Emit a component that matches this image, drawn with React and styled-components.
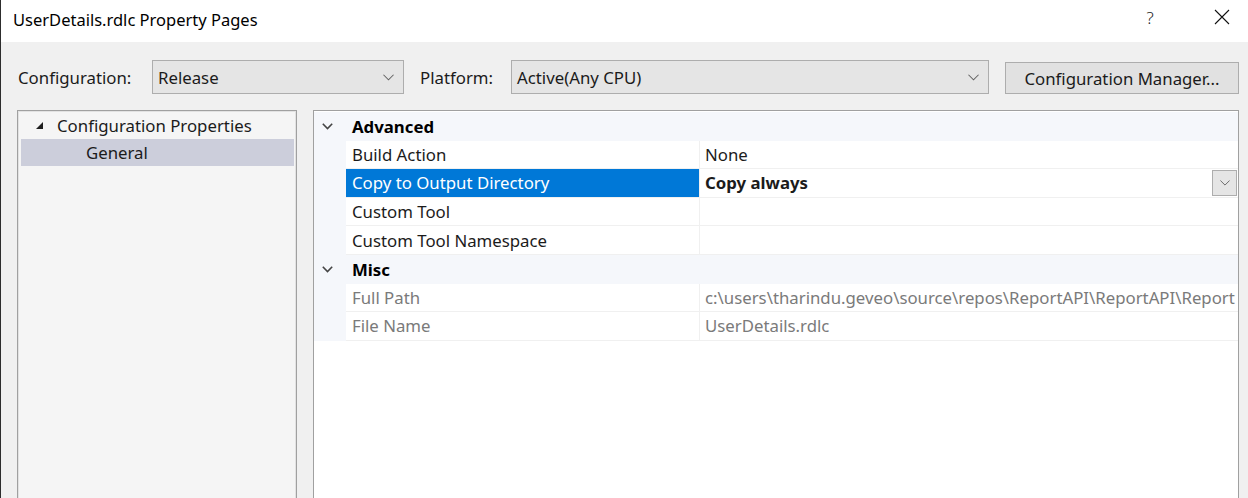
import React from "react";
import styled, { createGlobalStyle } from "styled-components";

const FONT = `"Noto Sans", "Open Sans", "Liberation Sans", sans-serif`;

const Global = createGlobalStyle`
  html, body { margin: 0; padding: 0; background: #f0f0f0; }
  body { font-family: ${FONT}; font-size: 16.8px; color: #1b1b1b; overflow: hidden; }
  * { box-sizing: border-box; }
`;

const Window = styled.div`
  width: 1248px;
  height: 498px;
  display: flex;
  flex-direction: column;
  border-left: 1px solid #2d2d2d;
  background: #f0f0f0;
  overflow: hidden;
`;

const TitleBar = styled.div`
  height: 42px;
  flex: none;
  background: #ffffff;
  display: flex;
  align-items: center;
  padding-left: 12px;
`;

const Title = styled.div`
  flex: 1;
  font-size: 16.5px;
  color: #000;
  padding-bottom: 4px;
`;

const TitleButton = styled.div`
  width: 46px;
  height: 32px;
  display: flex;
  align-items: center;
  justify-content: center;
  margin-bottom: 8px;
  margin-right: ${(p) => p.$mr || 0}px;
  font-size: 17px;
  color: #222;
  font-weight: 300;
`;

const Body = styled.div`
  flex: 1;
  display: flex;
  flex-direction: column;
  padding: 18px 9px 0 16px;
  min-height: 0;
`;

const Toolbar = styled.div`
  display: flex;
  align-items: center;
  height: 34px;
`;

const Label = styled.span`
  width: ${(p) => p.$w}px;
  padding-left: 1px;
  flex: none;
  white-space: nowrap;
`;

const Select = styled.div`
  width: ${(p) => p.$w}px;
  height: 34px;
  flex: none;
  background: #e5e5e5;
  border: 1px solid #adadad;
  display: flex;
  align-items: center;
  justify-content: space-between;
  padding: 0 9px 0 5px;
  margin-right: ${(p) => p.$mr || 0}px;
`;

const Button = styled.div`
  width: 234px;
  height: 32px;
  margin-top: 2px;
  flex: none;
  background: #e1e1e1;
  border: 1px solid #adadad;
  display: flex;
  align-items: center;
  justify-content: center;
  white-space: nowrap;
`;

const Main = styled.div`
  display: flex;
  gap: 16px;
  margin-top: 16px;
  flex: 1;
  min-height: 0;
`;

const Tree = styled.div`
  width: 280px;
  flex: none;
  background: #f5f5f5;
  border: 1px solid #a0a0a0;
  border-bottom: none;
  box-shadow: inset 1px 1px 0 #e2e2e2, inset -1px 0 0 #e2e2e2;
  padding: 1px 2px 0 3px;
  height: 400px;
`;

const TreeRow = styled.div`
  height: 27px;
  display: flex;
  align-items: center;
  padding-left: ${(p) => p.$indent}px;
  background: ${(p) => (p.$selected ? "#cccedb" : "transparent")};
  white-space: nowrap;
`;

const Expander = styled.span`
  width: 22px;
  display: flex;
  align-items: center;
`;

const Grid = styled.div`
  flex: 1;
  background: #ffffff;
  border: 1px solid #a0a0a0;
  border-bottom: none;
  height: 400px;
  display: flex;
  flex-direction: column;
  padding-top: 1px;
  overflow: hidden;
`;

const Row = styled.div`
  display: grid;
  grid-template-columns: 32px 354px minmax(0, 1fr);
  height: 28.6px;
  flex: none;
  background: #f5f7fb;
`;

const Gutter = styled.div`
  display: flex;
  align-items: center;
  justify-content: center;
  padding-right: 5px;
`;

const CategoryName = styled.div`
  grid-column: 2 / 4;
  display: flex;
  align-items: center;
  font-weight: 700;
  padding-left: 6px;
  color: #000;
`;

const NameCell = styled.div`
  display: flex;
  align-items: center;
  padding-left: 6px;
  background: ${(p) => (p.$selected ? "#0078d7" : "#ffffff")};
  color: ${(p) => (p.$selected ? "#ffffff" : p.$disabled ? "#7a7a7a" : "#1b1b1b")};
  border-bottom: 1px solid #f0f0f0;
  border-right: 1px solid #f0f0f0;
  white-space: nowrap;
`;

const ValueCell = styled.div`
  display: flex;
  align-items: center;
  padding-left: 5px;
  background: #ffffff;
  border-bottom: 1px solid #f0f0f0;
  color: ${(p) => (p.$disabled ? "#7a7a7a" : "#1b1b1b")};
  font-weight: ${(p) => (p.$bold ? 700 : 400)};
  white-space: nowrap;
  overflow: hidden;
`;

const ValueText = styled.span`
  flex: 1;
  min-width: 0;
  overflow: hidden;
  text-overflow: clip;
`;

const DropButton = styled.div`
  width: 25px;
  height: 26px;
  flex: none;
  background: #e5e5e5;
  border: 1px solid #adadad;
  display: flex;
  align-items: center;
  justify-content: center;
  margin-right: 1px;
`;

const Chevron = ({ w = 11, color = "#606060" }) => (
  <svg width={w} height={Math.round(w / 2) + 1} viewBox="0 0 12 7">
    <polyline points="0.5,0.5 6,6 11.5,0.5" fill="none" stroke={color} strokeWidth="1.1" />
  </svg>
);

const CatChevron = () => (
  <svg width="11" height="7" viewBox="0 0 11 7">
    <polyline points="0.8,0.8 5.5,5.5 10.2,0.8" fill="none" stroke="#444" strokeWidth="1.6" />
  </svg>
);

const TreeTriangle = () => (
  <svg width="9" height="9" viewBox="0 0 9 9">
    <polygon points="8,1 8,8 1,8" fill="#1e1e1e" />
  </svg>
);

const CloseIcon = () => (
  <svg width="16" height="16" viewBox="0 0 16 16">
    <path d="M1 1 L15 15 M15 1 L1 15" stroke="#111" strokeWidth="1.1" />
  </svg>
);

const props = [
  { cat: "Advanced" },
  { name: "Build Action", value: "None" },
  { name: "Copy to Output Directory", value: "Copy always", selected: true, bold: true, drop: true },
  { name: "Custom Tool", value: "" },
  { name: "Custom Tool Namespace", value: "" },
  { cat: "Misc" },
  { name: "Full Path", value: "c:\\users\\tharindu.geveo\\source\\repos\\ReportAPI\\ReportAPI\\Report", disabled: true },
  { name: "File Name", value: "UserDetails.rdlc", disabled: true },
];

export default function App() {
  return (
    <>
      <Global />
      <Window>
        <TitleBar>
          <Title>UserDetails.rdlc Property Pages</Title>
          <TitleButton $mr={26}>?</TitleButton>
          <TitleButton $mr={3}>
            <CloseIcon />
          </TitleButton>
        </TitleBar>
        <Body>
          <Toolbar>
            <Label $w={135}>Configuration:</Label>
            <Select $w={252} $mr={15}>
              <span>Release</span>
              <Chevron />
            </Select>
            <Label $w={92}>Platform:</Label>
            <Select $w={478} $mr={16}>
              <span>Active(Any CPU)</span>
              <Chevron />
            </Select>
            <Button>Configuration Manager...</Button>
          </Toolbar>
          <Main>
            <Tree>
              <TreeRow $indent={14}>
                <Expander>
                  <TreeTriangle />
                </Expander>
                Configuration Properties
              </TreeRow>
              <TreeRow $indent={65} $selected>
                General
              </TreeRow>
            </Tree>
            <Grid>
              {props.map((p, i) =>
                p.cat ? (
                  <Row key={i}>
                    <Gutter>
                      <CatChevron />
                    </Gutter>
                    <CategoryName>{p.cat}</CategoryName>
                  </Row>
                ) : (
                  <Row key={i}>
                    <Gutter />
                    <NameCell $selected={p.selected} $disabled={p.disabled}>
                      {p.name}
                    </NameCell>
                    <ValueCell $disabled={p.disabled} $bold={p.bold}>
                      <ValueText>{p.value}</ValueText>
                      {p.drop && (
                        <DropButton>
                          <Chevron w={10} />
                        </DropButton>
                      )}
                    </ValueCell>
                  </Row>
                )
              )}
            </Grid>
          </Main>
        </Body>
      </Window>
    </>
  );
}
